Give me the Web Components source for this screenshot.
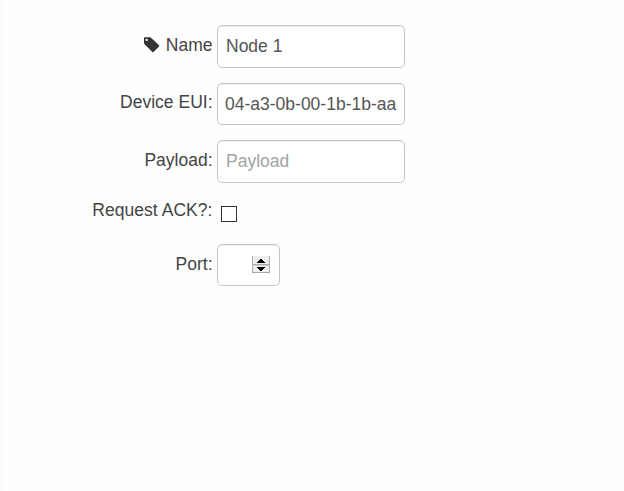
<!DOCTYPE html>
<html lang="en"><head><meta charset="utf-8"><title>Edit node</title>
<style>
html,body{margin:0;height:100%;background:#fefefe}
body{overflow:hidden;font:17.5px/25px "Liberation Sans",Arial,sans-serif;color:#444}
</style></head><body>
<node-form>
<form-row style="--h:43px;--gap:15px;--label-top:8px"><tag-icon slot="label"></tag-icon><span slot="label">Name</span><text-field value="Node 1"></text-field></form-row>
<form-row style="--h:42px;--gap:15px;--label-top:7px"><span slot="label">Device EUI:</span><text-field value="04-a3-0b-00-1b-1b-aa"></text-field></form-row>
<form-row style="--h:43px;--gap:15px;--label-top:8px"><span slot="label">Payload:</span><text-field placeholder="Payload"></text-field></form-row>
<form-row style="--h:31px;--gap:15px;--label-top:0px"><span slot="label" style="letter-spacing:.04px">Request ACK?:</span><check-box></check-box></form-row>
<form-row style="--h:42px;--gap:0px;--label-top:8px"><span slot="label">Port:</span><number-field></number-field></form-row>
</node-form>
<script>
const define=(name,html,setup)=>customElements.define(name,class extends HTMLElement{
  constructor(){super();this.attachShadow({mode:'open'}).innerHTML=html;}
  connectedCallback(){if(setup)setup(this,this.shadowRoot);}
});
define('node-form',`<style>:host{display:flex;flex-direction:column;box-sizing:border-box;height:100%;padding-top:25px;background:linear-gradient(90deg,#fafafa 0,#fefefe 4px)}</style><slot></slot>`);
define('form-row',`<style>:host{display:grid;grid-template-columns:212.5px auto;column-gap:4.5px;justify-content:start;height:var(--h);margin-bottom:var(--gap)}
.label{display:flex;justify-content:flex-end;height:25px;padding-top:var(--label-top);white-space:nowrap}</style><div class="label"><slot name="label"></slot></div><slot></slot>`);
define('tag-icon',`<style>:host{display:block;width:16px;height:16px;margin:4px 6px 0 0}svg{display:block}</style>
<svg width="16" height="16" viewBox="0 0 16 16"><path fill="#333" fill-rule="evenodd" d="M0 1.1Q0 .2 .9 .2H5.7Q6.6 .2 7.3 .9L15 8.2Q15.6 8.8 15 9.4L9.5 14.9Q8.8 15.5 8.1 14.8L.8 7.6Q0 6.8 0 5.8ZM2.7 1.7a1.15 1.15 0 1 0 .01 0Z"/></svg>`);
define('text-field',`<style>:host{display:block;width:188px;height:100%}
input{display:block;box-sizing:border-box;width:100%;height:100%;margin:0;padding:0 7px 0 8px;border:1px solid #c6c6c6;border-radius:5px;background:#fff;box-shadow:inset 0 1px 1px rgba(0,0,0,.075);font:inherit;color:#555;outline:0}
input::placeholder{color:#a4a4a4;opacity:1}</style><input type="text">`,(el,root)=>{
  const i=root.querySelector('input');i.value=el.getAttribute('value')||'';i.placeholder=el.getAttribute('placeholder')||'';
  if(i.value.length>15)i.style.paddingLeft='7px';
});
define('check-box',`<style>:host{display:block;padding:8px 0 0 4px}
input{appearance:none;display:block;box-sizing:border-box;width:16px;height:16px;margin:0;border:1px solid #333;background:#fff}</style><input type="checkbox">`);
define('number-field',`<style>:host{display:flex;box-sizing:border-box;width:63px;height:100%;align-items:center;padding:0 8px;border:1px solid #c6c6c6;border-radius:5px;background:#fff;box-shadow:inset 0 1px 1px rgba(0,0,0,.075)}
input{appearance:none;width:26px;min-width:0;margin:0;padding:0;border:0;background:none;font:inherit;color:#555;outline:0}
svg{flex:none;display:block}</style><input type="text" inputmode="numeric">
<svg width="19" height="18" viewBox="0 0 19 18" shape-rendering="crispEdges"><path fill="#eee" d="M0 0H18V17H0Z"/><path fill="#aaa" d="M0 0H1V17H0ZM17 0H18V17H17ZM0 8H18V9H0ZM0 16H18V17H0Z"/><path fill="#ccc" d="M0 9H18V10H0Z"/><path fill="#000" d="M8 3H10V4H11V5H12V6H13V7H5V6H6V5H7V4H8ZM5 11H13V12H12V13H11V14H10V15H8V14H7V13H6V12H5Z"/></svg>`);
</script></body></html>
